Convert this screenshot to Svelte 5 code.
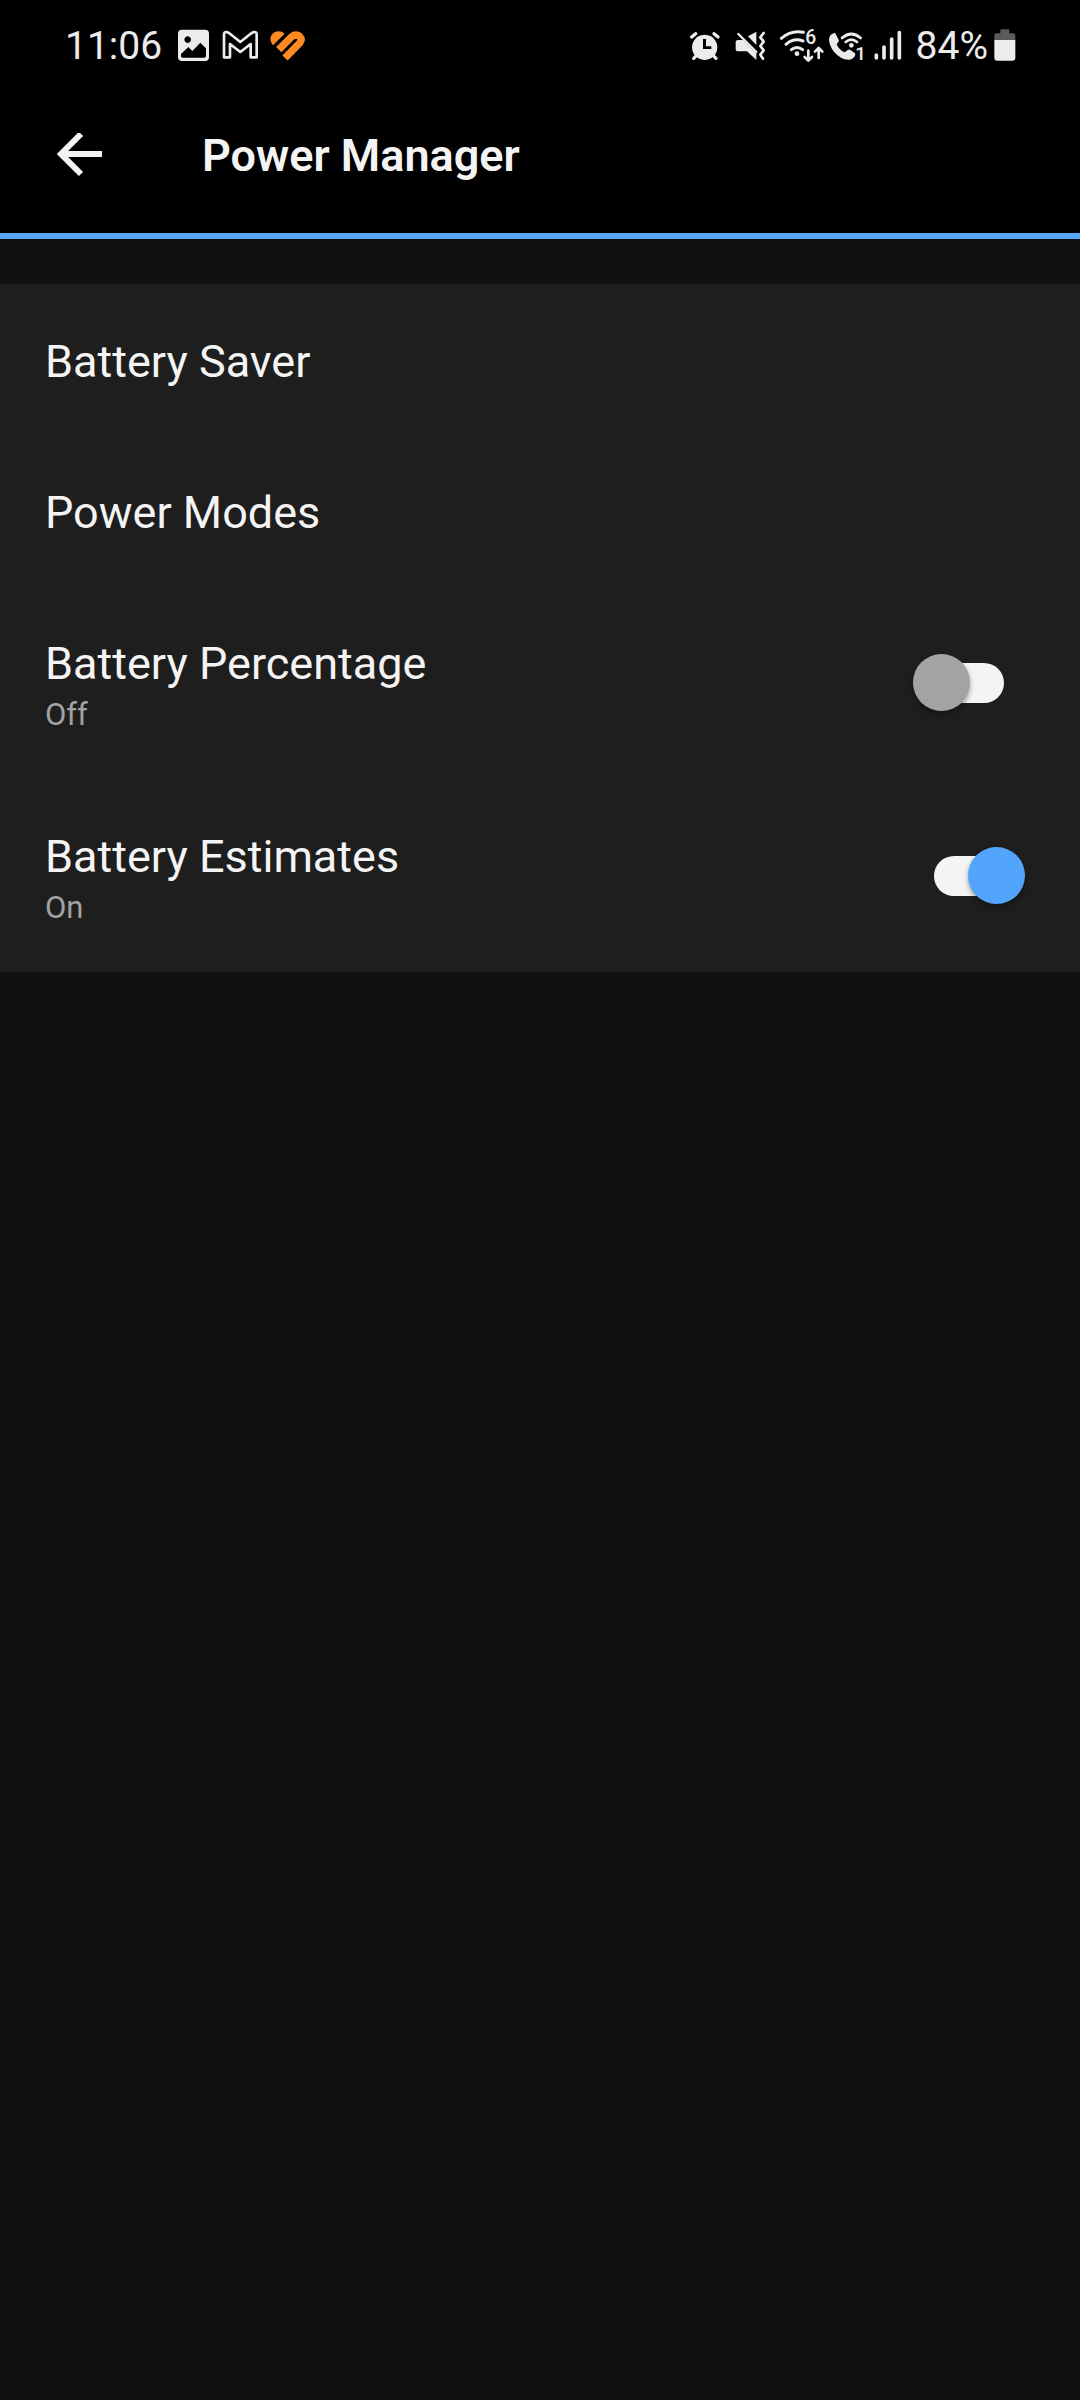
<script lang="ts">
  type Link = { id: string; title: string };
  type Toggle = { id: string; title: string; on: boolean };

  const links: Link[] = [
    { id: 'saver', title: 'Battery Saver' },
    { id: 'modes', title: 'Power Modes' }
  ];

  let toggles = $state<Toggle[]>([
    { id: 'percentage', title: 'Battery Percentage', on: false },
    { id: 'estimates', title: 'Battery Estimates', on: true }
  ]);
</script>

<div class="screen">
  <div class="status">
    <div class="group">
      <span class="clock">11:06</span>
      <svg width="40" height="36" viewBox="369 39 120 108" aria-hidden="true">
        <path fill-rule="evenodd" d="M396 44h69q12 0 12 12v70q0 12-12 12h-69q-12 0-12-12v-70q0-12 12-12zM413 64a10 10 0 1 0 .1 0zM393 117v6q0 5 5 5h65q5 0 5-5v-23l-17-17-24 25-12-12z" />
      </svg>
      <svg width="48" height="36" viewBox="489 39 144 108" aria-hidden="true">
        <path fill="none" stroke="currentColor" stroke-width="8" stroke-linejoin="round" d="M522 127V58q0-8 8-7l7 3 34 27 34-27 7-3q8-1 8 7v69h-18V87l-31 24-31-24v40z" />
      </svg>
      <svg class="heart" width="44" height="36" viewBox="633 39 132 108" aria-hidden="true">
        <path d="M669 91Q659 80 662 67 667 50 685 49 697 49 704 56z" />
        <path fill="none" stroke="currentColor" stroke-width="22" d="M686 104L725 65Q737 56 748 63 758 73 749 84L705 129" />
      </svg>
    </div>

    <div class="group">
      <svg width="42" height="36" viewBox="20 39 126 108" aria-hidden="true">
        <path fill-rule="evenodd" d="M73 59a38 38 0 1 0 .1 0zM68 72h9v22h16v8H68z" />
        <path fill="none" stroke="currentColor" stroke-width="10" stroke-linecap="round" d="M34 66l12-10M113 66l-12-10M40 130l9-9M107 130l-9-9" />
      </svg>
      <svg width="45" height="36" viewBox="146 39 135 108" aria-hidden="true">
        <path d="M203 64l25-14v40zM166 82q0-7 8-7h14l40 40v20l-28-26h-26q-8 0-8-8z" />
        <path fill="none" stroke="currentColor" stroke-width="7" stroke-linecap="round" d="M174 57l54 54" />
        <path fill="none" stroke="currentColor" stroke-width="8" stroke-linecap="round" stroke-linejoin="round" d="M250 54l-10 13 10 13-10 13 10 13-10 13 8 12" />
      </svg>
      <svg width="53" height="48" viewBox="281 21 159 144" aria-hidden="true">
        <g fill="none" stroke="currentColor" stroke-width="9" stroke-linecap="round" stroke-linejoin="round">
          <path d="M303 70q30-26 66-18M317 88q24-21 51-10M333 104q17-13 34 0" />
          <path stroke-width="8" d="M384 107v29m-11-10 11 11 11-11M415 129v-29m-11 10 11-11 11 11" />
        </g>
        <circle cx="350" cy="116" r="7" />
        <text x="375" y="88" font-size="58" font-weight="500">6</text>
      </svg>
      <svg width="43" height="48" viewBox="440 21 129 144" aria-hidden="true">
        <path d="M446 72q2-13 14-17 4-2 6 2l9 17q2 4-1 7l-5 7q7 17 24 24l9-7q4-3 8 0l13 9q4 3 1 8-7 12-19 12-25-1-44-24-15-18-15-38z" />
        <path fill="none" stroke="currentColor" stroke-width="8" stroke-linecap="round" d="M485 69q28-24 56 0M496 81q17-14 34 0" />
        <circle cx="513" cy="91" r="7" />
        <text x="525" y="134" font-size="56" font-weight="500">1</text>
      </svg>
      <svg width="46" height="36" viewBox="29 39 138 108" aria-hidden="true">
        <path fill="none" stroke="currentColor" stroke-width="11" stroke-linecap="round" d="M48 120v9M71 96v33M94 72v57M117 53v76" />
      </svg>
      <span>84%</span>
      <svg width="30" height="36" viewBox="383 39 90 108" aria-hidden="true">
        <path fill="#5a5a5a" d="M402 76V62q0-7 7-7h11v-8q0-4 4-4h19q4 0 4 4v8h11q7 0 7 7v14z" />
        <path d="M402 75h63v53q0 9-9 9h-45q-9 0-9-9z" />
      </svg>
    </div>
  </div>

  <header>
    <button type="button" class="back" aria-label="Back">
      <svg width="46" height="46" viewBox="0 0 46 46" aria-hidden="true">
        <path fill="none" stroke="currentColor" stroke-width="6" d="M25 1L5 21l20 20M5 21h41" />
      </svg>
    </button>
    <h1>Power Manager</h1>
  </header>

  <main>
    {#each links as link (link.id)}
      <button type="button" class="row link">
        <span class="title">{link.title}</span>
      </button>
    {/each}
    {#each toggles as toggle (toggle.id)}
      <label class="row" for={toggle.id}>
        <span class="text">
          <span class="title">{toggle.title}</span>
          <span class="state">{toggle.on ? 'On' : 'Off'}</span>
        </span>
        <input id={toggle.id} type="checkbox" role="switch" bind:checked={toggle.on} />
      </label>
    {/each}
  </main>
</div>

<style>
  :global(body) { margin: 0; background: #101010; }
  .screen {
    min-height: 100vh;
    background: #101010;
    color: #f4f4f4;
    font-family: Roboto, sans-serif;
  }
  svg { display: block; fill: currentColor; flex: none; }

  .status {
    display: flex;
    justify-content: space-between;
    align-items: center;
    height: 92px;
    padding: 0 62px 0 65px;
    background: #000;
    color: #ececec;
    font-size: 39px;
  }
  .group { display: flex; align-items: center; }
  .clock { margin-right: 11px; }
  .heart { color: #ff8a22; }

  header {
    display: flex;
    align-items: center;
    gap: 100px;
    padding: 32px 45px 46px 56px;
    background: #000;
    border-bottom: 6px solid #57a6f8;
  }
  .back { padding: 0; border: 0; background: none; color: inherit; cursor: pointer; }
  h1 { margin: 0; font-size: 45px; line-height: 63px; font-weight: 600; }

  main { margin-top: 45px; background: #1e1e1e; }
  .row {
    display: flex;
    align-items: center;
    justify-content: space-between;
    box-sizing: border-box;
    width: 100%;
    padding: 48px 55px 48px 45px;
    border: 0;
    background: none;
    color: inherit;
    font: inherit;
    text-align: left;
    cursor: pointer;
  }
  .link { padding-bottom: 44px; }
  .text { display: flex; flex-direction: column; gap: 5px; }
  .title { font-size: 45px; line-height: 59px; }
  .state { font-size: 31px; line-height: 33px; color: #a2a2a2; }

  input {
    appearance: none;
    display: grid;
    align-items: center;
    flex: none;
    width: 112px;
    height: 57px;
    margin: 0;
    cursor: pointer;
  }
  input::before,
  input::after { content: ''; grid-area: 1 / 1; }
  input::before {
    justify-self: center;
    width: 70px;
    height: 40px;
    border-radius: 20px;
    background: #f4f4f4;
  }
  input::after {
    justify-self: start;
    width: 57px;
    height: 57px;
    border-radius: 50%;
    background: #a3a3a3;
    box-shadow: 0 3px 5px rgba(0, 0, 0, 0.35);
  }
  input:checked::after { justify-self: end; background: #52a5fa; }
</style>
